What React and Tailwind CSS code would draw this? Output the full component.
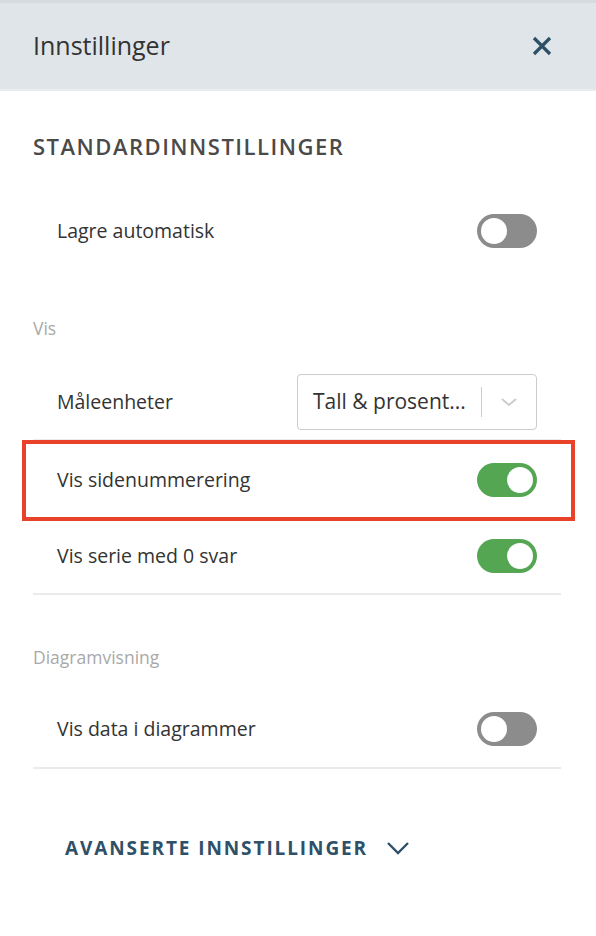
import React from "react";

const font = { fontFamily: '"Open Sans", "Liberation Sans", sans-serif' };

const Toggle = ({ on }) => (
  <div
    className={`flex h-[34px] w-[60px] shrink-0 items-center rounded-full px-[4px] ${
      on ? "justify-end bg-[#54a653]" : "justify-start bg-[#8c8c8c]"
    }`}
  >
    <div className="h-[26px] w-[26px] rounded-full bg-white" />
  </div>
);

const Row = ({ label, border, className = "h-[78px]", children }) => (
  <div
    className={`flex items-center justify-between px-6 ${className} ${
      border ? "border-b-2 border-[#ebebeb]" : ""
    }`}
  >
    <span className="text-[19.5px] text-[#333333]">{label}</span>
    {children}
  </div>
);

export default function App() {
  return (
    <div className="min-h-[936px] w-[596px] bg-white" style={font}>
      <div className="h-[3px] bg-[#d6dade]" />
      {/* Header */}
      <div className="flex h-[88px] items-center justify-between border-b-2 border-[#e9ebed] bg-[#e0e5e9] pl-[33px] pr-[44px]">
        <h1 className="text-[25px] text-[#333333]">Innstillinger</h1>
        <svg width="20" height="20" viewBox="0 0 20 20" fill="none">
          <path d="M2 2L18 18M18 2L2 18" stroke="#2d4f67" strokeWidth="3.2" />
        </svg>
      </div>

      <div className="pl-[33px] pr-[35px]">
        <h2 className="mt-[41px] text-[22px] font-semibold leading-[28px] tracking-[1.5px] text-[#4a4a4a]">
          STANDARDINNSTILLINGER
        </h2>

        <div className="mt-[32px]">
          <Row label="Lagre automatisk">
            <Toggle on={false} />
          </Row>
        </div>

        <div className="mt-[47px] text-[17.5px] leading-[22px] text-[#a9a9a9]">Vis</div>

        <div className="mt-[26px]">
          <Row label="Måleenheter" border className="h-[76px]">
            <div className="flex h-[56px] w-[240px] items-center rounded border border-[#cccccc] pl-[15px]">
              <span className="flex-1 text-[21px] text-[#333333]">Tall &amp; prosent...</span>
              <div className="h-[30px] w-px bg-[#cccccc]" />
              <div className="flex w-[54px] justify-center">
                <svg width="18" height="10" viewBox="0 0 18 10" fill="none">
                  <path d="M2 2L9 8L16 2" stroke="#cccccc" strokeWidth="2" />
                </svg>
              </div>
            </div>
          </Row>
          <div className="relative">
            <Row label="Vis sidenummerering" className="h-[78px]">
              <Toggle on />
            </Row>
            <div className="pointer-events-none absolute -left-[11px] -right-[14px] -top-[1px] -bottom-[2px] border-[4px] border-[#e8432a]" />
          </div>
          <Row label="Vis serie med 0 svar" border className="h-[76px]">
            <Toggle on />
          </Row>
        </div>

        <div className="mt-[51px] text-[17.5px] leading-[22px] text-[#a9a9a9]">Diagramvisning</div>

        <div className="mt-[23px]">
          <Row label="Vis data i diagrammer" border>
            <Toggle on={false} />
          </Row>
        </div>

        <div className="mt-[67px] flex items-center pl-[32px]">
          <span className="text-[19px] font-bold leading-[24px] tracking-[1.9px] text-[#2e5068]">
            AVANSERTE INNSTILLINGER
          </span>
          <svg className="ml-[18px]" width="24" height="14" viewBox="0 0 24 14" fill="none">
            <path d="M2 2L12 12L22 2" stroke="#2e5068" strokeWidth="2.4" />
          </svg>
        </div>
      </div>
    </div>
  );
}
